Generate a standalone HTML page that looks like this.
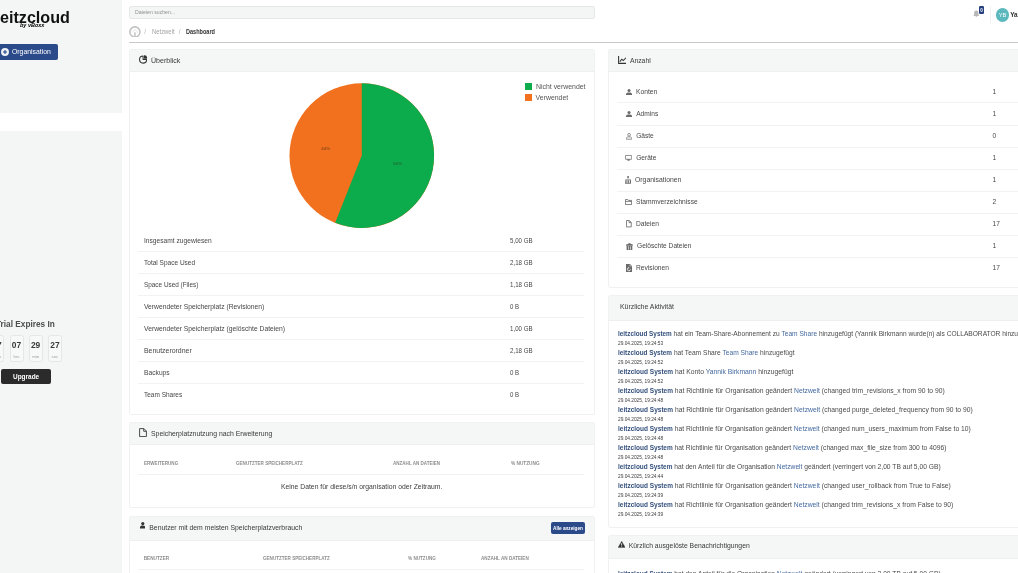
<!DOCTYPE html>
<html><head><meta charset="utf-8"><style>
html,body{margin:0;padding:0}
body{will-change:transform;width:1018px;height:573px;overflow:hidden;position:relative;background:#fff;font-family:"Liberation Sans",sans-serif;color:#444}
.a{position:absolute;white-space:nowrap;line-height:1}
.card{position:absolute;background:#fff;border:1px solid #f0f1f1;box-sizing:border-box;border-radius:2px;overflow:hidden}
.ch{position:absolute;left:0;right:0;top:0;background:#f5f6f6;border-bottom:1px solid #eeefef;box-sizing:border-box}
.sep{position:absolute;height:1px;background:#f1f2f2}
.lk{color:#44699f}
.sys{color:#34507c;font-weight:bold;font-size:6.45px}
</style></head><body>
<div class="a" style="left:0px;top:0px;width:122px;height:112.5px;background:#f4f5f5;"></div>
<div class="a" style="left:0px;top:131px;width:122px;height:442px;background:#f4f5f5;"></div>
<div class="a " style="left:-0.40px;top:9px;font-size:16.5px;color:#111;font-weight:bold;transform:scaleX(0.9776);transform-origin:0 0;">eitzcloud</div>
<div class="a " style="left:20.40px;top:23px;font-size:5.6px;color:#000;font-weight:bold;font-style:italic;transform:scaleX(0.9799);transform-origin:0 0;">by vBoxx</div>
<div class="a" style="left:-3px;top:44.2px;width:61.4px;height:15.5px;background:#2b4a8a;border-radius:2px"></div>
<svg class="a" style="left:1px;top:48px" width="8" height="8" viewBox="0 0 8 8"><circle cx="4" cy="4" r="3.95" fill="#eef1f6"/><rect x="2" y="3.45" width="4" height="1.1" fill="#2b4a8a"/><rect x="3.45" y="2" width="1.1" height="4" fill="#2b4a8a"/></svg>
<div class="a " style="left:12.20px;top:49px;font-size:6.85px;color:#fff;transform:scaleX(0.9990);transform-origin:0 0;">Organisation</div>
<div class="a " style="left:-3.80px;top:320px;font-size:8.4px;color:#4d4d4d;font-weight:bold;transform:scaleX(0.9873);transform-origin:0 0;">Trial Expires In</div>
<div class="a" style="left:-10.1px;top:335.1px;width:14px;height:26.6px;border:1px solid #e5e6e6;background:#f7f8f8;box-sizing:border-box;border-radius:2.5px"></div>
<div class="a" style="left:9.5px;top:335.1px;width:14px;height:26.6px;border:1px solid #e5e6e6;background:#f7f8f8;box-sizing:border-box;border-radius:2.5px"></div>
<div class="a" style="left:28.6px;top:335.1px;width:14px;height:26.6px;border:1px solid #e5e6e6;background:#f7f8f8;box-sizing:border-box;border-radius:2.5px"></div>
<div class="a" style="left:47.6px;top:335.1px;width:14.6px;height:26.6px;border:1px solid #e5e6e6;background:#f7f8f8;box-sizing:border-box;border-radius:2.5px"></div>
<div class="a" style="left:-10.1px;top:341px;width:14px;text-align:center;font-size:8.4px;font-weight:bold;color:#3a3a3a">07</div>
<div class="a" style="left:-10.1px;top:355px;width:14px;text-align:center;font-size:4.3px;color:#9c9c9c">days</div>
<div class="a" style="left:9.5px;top:341px;width:14px;text-align:center;font-size:8.4px;font-weight:bold;color:#3a3a3a">07</div>
<div class="a" style="left:9.5px;top:355px;width:14px;text-align:center;font-size:4.3px;color:#9c9c9c">hrs</div>
<div class="a" style="left:28.6px;top:341px;width:14px;text-align:center;font-size:8.4px;font-weight:bold;color:#3a3a3a">29</div>
<div class="a" style="left:28.6px;top:355px;width:14px;text-align:center;font-size:4.3px;color:#9c9c9c">min</div>
<div class="a" style="left:47.6px;top:341px;width:14.6px;text-align:center;font-size:8.4px;font-weight:bold;color:#3a3a3a">27</div>
<div class="a" style="left:47.6px;top:355px;width:14.6px;text-align:center;font-size:4.3px;color:#9c9c9c">sec</div>
<div class="a" style="left:1.4px;top:369.4px;width:49.6px;height:14.6px;background:#2b2b2b;border-radius:2px"></div>
<div class="a " style="left:12.90px;top:374px;font-size:6.6px;color:#fff;font-weight:bold;transform:scaleX(0.9787);transform-origin:0 0;">Upgrade</div>
<div class="a" style="left:129.1px;top:6px;width:465.6px;height:12.6px;background:#f4f5f5;border:1px solid #e6e7e7;box-sizing:border-box;border-radius:2px"></div>
<div class="a " style="left:135.00px;top:10px;font-size:5.2px;color:#8f8f8f;transform:scaleX(0.9933);transform-origin:0 0;">Dateien suchen...</div>
<svg class="a" style="left:129px;top:25.6px" width="11.8" height="11.8" viewBox="0 0 11.8 11.8"><circle cx="5.9" cy="5.9" r="5.05" fill="none" stroke="#c3c3c3" stroke-width="1.6"/><path d="M3.2 6.2 L5.9 3.6 L8.6 6.2" fill="none" stroke="#d8d8d8" stroke-width="0.7"/><rect x="5.15" y="6.3" width="1.5" height="4.6" fill="#c3c3c3"/></svg>
<div class="a " style="left:144.20px;top:29px;font-size:6.3px;color:#b5b5b5;">/</div>
<div class="a " style="left:152.00px;top:29px;font-size:6.3px;color:#a3a3a3;transform:scaleX(0.9355);transform-origin:0 0;">Netzwelt</div>
<div class="a " style="left:178.80px;top:29px;font-size:6.3px;color:#b5b5b5;">/</div>
<div class="a " style="left:185.90px;top:29px;font-size:6.3px;color:#333;font-weight:bold;transform:scaleX(0.8813);transform-origin:0 0;">Dashboard</div>
<div class="a" style="left:129px;top:42px;width:889px;height:1px;background:#c8c9c9;"></div>
<svg class="a" style="left:972.6px;top:10px" width="6.6" height="7" viewBox="0 0 6.6 7"><path d="M3.3 0.4 C1.7 0.4 1.1 1.8 1.1 3.2 L1.1 4.9 L0.2 6.1 L6.4 6.1 L5.5 4.9 L5.5 3.2 C5.5 1.8 4.9 0.4 3.3 0.4 Z" fill="#b8b8b8"/><circle cx="3.3" cy="6.4" r="0.6" fill="#b8b8b8"/></svg>
<div class="a" style="left:978.8px;top:6.1px;width:5.4px;height:8.3px;background:#243f7d;border-radius:1.2px"></div>
<div class="a" style="left:978.8px;top:9px;width:5.4px;text-align:center;font-size:4.6px;font-weight:bold;color:#fff">0</div>
<div class="a" style="left:990px;top:6px;width:0.5px;height:18px;background:#f2f2f2;"></div>
<div class="a" style="left:995.6px;top:7.9px;width:13.8px;height:13.8px;border-radius:50%;background:#5bb8bc"></div>
<div class="a" style="left:995.6px;top:13px;width:13.8px;text-align:center;font-size:5.6px;color:#fff">YB</div>
<div class="a " style="left:1010.20px;top:12px;font-size:6.4px;color:#2f2f2f;font-weight:bold;">Ya</div>
<div class="card" style="left:129.2px;top:49.2px;width:465.5px;height:366.3px"><div class="ch" style="height:22.3px"></div></div>
<div class="card" style="left:129.2px;top:422.2px;width:465.5px;height:86.3px"><div class="ch" style="height:22.1px"></div></div>
<div class="card" style="left:129.2px;top:516px;width:465.5px;height:80px"><div class="ch" style="height:23.7px"></div></div>
<div class="card" style="left:608.2px;top:49.3px;width:470px;height:238.7px"><div class="ch" style="height:22.2px"></div></div>
<div class="card" style="left:608.2px;top:295.2px;width:470px;height:232.4px"><div class="ch" style="height:24.4px"></div></div>
<div class="card" style="left:608.2px;top:535.2px;width:470px;height:80px"><div class="ch" style="height:23.0px"></div></div>
<svg class="a" style="left:138.6px;top:55.3px" width="8.8" height="8.8" viewBox="0 0 8.8 8.8"><path d="M4.1 1.05 A3.55 3.55 0 1 0 7.65 4.6 L4.1 4.6 Z" fill="none" stroke="#333" stroke-width="1.05" stroke-linejoin="round"/><path d="M5.0 0.3 L5.0 3.7 L8.4 3.7 A3.4 3.4 0 0 0 5.0 0.3 Z" fill="#333"/></svg>
<div class="a " style="left:150.70px;top:57px;font-size:7.0px;color:#3a3a3a;transform:scaleX(1.0042);transform-origin:0 0;">Überblick</div>
<svg class="a" style="left:0;top:0" width="1018" height="573" viewBox="0 0 1018 573"><circle cx="361.8" cy="155.6" r="72.3" fill="#f1711f"/><path d="M361.8 155.6 L361.8 83.3 A72.3 72.3 0 1 1 335.18 222.82 Z" fill="#0cab4c"/><text x="393" y="164.6" font-size="4.4" fill="#2a3a2a" fill-opacity="0.75" font-family="Liberation Sans">56%</text><text x="321.3" y="150.1" font-size="4.4" fill="#3a2a1a" fill-opacity="0.75" font-family="Liberation Sans">44%</text></svg>
<div class="a" style="left:525px;top:83px;width:7px;height:6.6px;background:#0cab4c;"></div>
<div class="a" style="left:525px;top:94px;width:7px;height:6.6px;background:#f1711f;"></div>
<div class="a " style="left:535.60px;top:84px;font-size:6.9px;color:#555;transform:scaleX(1.0026);transform-origin:0 0;">Nicht verwendet</div>
<div class="a " style="left:535.60px;top:95px;font-size:6.9px;color:#555;">Verwendet</div>
<div class="a " style="left:143.90px;top:238px;font-size:6.75px;color:#474747;transform:scaleX(0.9845);transform-origin:0 0;">Insgesamt zugewiesen</div>
<div class="a " style="left:509.80px;top:238px;font-size:6.75px;color:#474747;transform:scaleX(0.9126);transform-origin:0 0;">5,00 GB</div>
<div class="sep" style="left:138px;width:446px;top:251.3px"></div>
<div class="a " style="left:143.90px;top:260px;font-size:6.75px;color:#474747;transform:scaleX(0.9658);transform-origin:0 0;">Total Space Used</div>
<div class="a " style="left:509.80px;top:260px;font-size:6.75px;color:#474747;transform:scaleX(0.9126);transform-origin:0 0;">2,18 GB</div>
<div class="sep" style="left:138px;width:446px;top:273.3px"></div>
<div class="a " style="left:143.90px;top:282px;font-size:6.75px;color:#474747;transform:scaleX(0.9460);transform-origin:0 0;">Space Used (Files)</div>
<div class="a " style="left:509.80px;top:282px;font-size:6.75px;color:#474747;transform:scaleX(0.9126);transform-origin:0 0;">1,18 GB</div>
<div class="sep" style="left:138px;width:446px;top:295.3px"></div>
<div class="a " style="left:143.90px;top:304px;font-size:6.75px;color:#474747;transform:scaleX(0.9988);transform-origin:0 0;">Verwendeter Speicherplatz (Revisionen)</div>
<div class="a " style="left:509.80px;top:304px;font-size:6.75px;color:#474747;transform:scaleX(0.8982);transform-origin:0 0;">0 B</div>
<div class="sep" style="left:138px;width:446px;top:317.3px"></div>
<div class="a " style="left:143.90px;top:326px;font-size:6.75px;color:#474747;transform:scaleX(1.0001);transform-origin:0 0;">Verwendeter Speicherplatz (gelöschte Dateien)</div>
<div class="a " style="left:509.80px;top:326px;font-size:6.75px;color:#474747;transform:scaleX(0.9126);transform-origin:0 0;">1,00 GB</div>
<div class="sep" style="left:138px;width:446px;top:339.3px"></div>
<div class="a " style="left:143.90px;top:348px;font-size:6.75px;color:#474747;transform:scaleX(1.0251);transform-origin:0 0;">Benutzerordner</div>
<div class="a " style="left:509.80px;top:348px;font-size:6.75px;color:#474747;transform:scaleX(0.9126);transform-origin:0 0;">2,18 GB</div>
<div class="sep" style="left:138px;width:446px;top:361.3px"></div>
<div class="a " style="left:143.90px;top:370px;font-size:6.75px;color:#474747;transform:scaleX(0.9927);transform-origin:0 0;">Backups</div>
<div class="a " style="left:509.80px;top:370px;font-size:6.75px;color:#474747;transform:scaleX(0.8982);transform-origin:0 0;">0 B</div>
<div class="sep" style="left:138px;width:446px;top:383.3px"></div>
<div class="a " style="left:143.90px;top:392px;font-size:6.75px;color:#474747;transform:scaleX(0.9605);transform-origin:0 0;">Team Shares</div>
<div class="a " style="left:509.80px;top:392px;font-size:6.75px;color:#474747;transform:scaleX(0.8982);transform-origin:0 0;">0 B</div>
<svg class="a" style="left:138.8px;top:428.2px" width="8" height="9.2" viewBox="0 0 8 9.2"><path d="M0.6 0.6 L4.9 0.6 L7.4 3.1 L7.4 8.6 L0.6 8.6 Z M4.7 0.6 L4.7 3.3 L7.4 3.3" fill="none" stroke="#4a4a4a" stroke-width="1.0" stroke-linejoin="round"/></svg>
<div class="a " style="left:150.70px;top:431px;font-size:6.86px;color:#3a3a3a;transform:scaleX(1.0002);transform-origin:0 0;">Speicherplatznutzung nach Erweiterung</div>
<div class="a " style="left:144.00px;top:462px;font-size:4.7px;color:#8d8d8d;font-weight:bold;transform:scaleX(0.9754);transform-origin:0 0;">ERWEITERUNG</div>
<div class="a " style="left:235.70px;top:462px;font-size:4.7px;color:#8d8d8d;font-weight:bold;transform:scaleX(0.9731);transform-origin:0 0;">GENUTZTER SPEICHERPLATZ</div>
<div class="a " style="left:392.80px;top:462px;font-size:4.7px;color:#8d8d8d;font-weight:bold;transform:scaleX(0.9684);transform-origin:0 0;">ANZAHL AN DATEIEN</div>
<div class="a " style="left:510.80px;top:462px;font-size:4.7px;color:#8d8d8d;font-weight:bold;transform:scaleX(1.0084);transform-origin:0 0;">% NUTZUNG</div>
<div class="sep" style="left:138px;width:446px;top:474px"></div>
<div class="a " style="left:281.10px;top:484px;font-size:6.8px;color:#3c3c3c;transform:scaleX(1.0006);transform-origin:0 0;">Keine Daten für diese/s/n organisation oder Zeitraum.</div>
<svg class="a" style="left:139.6px;top:522.3px" width="5.6" height="6.4" viewBox="0 0 5.6 6.4"><circle cx="2.8" cy="1.6" r="1.6" fill="#333"/><path d="M0 6.4 L0 5.4 C0 4.2 1.1 3.6 2.8 3.6 C4.5 3.6 5.6 4.2 5.6 5.4 L5.6 6.4 Z" fill="#333"/></svg>
<div class="a " style="left:149.30px;top:525px;font-size:6.83px;color:#3a3a3a;transform:scaleX(1.0000);transform-origin:0 0;">Benutzer mit dem meisten Speicherplatzverbrauch</div>
<div class="a" style="left:551px;top:522px;width:33.9px;height:12.3px;background:#2b4a8a;border-radius:2px"></div>
<div class="a " style="left:553.30px;top:527px;font-size:4.7px;color:#fff;font-weight:bold;transform:scaleX(0.9988);transform-origin:0 0;">Alle anzeigen</div>
<div class="a " style="left:143.70px;top:557px;font-size:4.7px;color:#8d8d8d;font-weight:bold;">BENUTZER</div>
<div class="a " style="left:262.50px;top:557px;font-size:4.7px;color:#8d8d8d;font-weight:bold;transform:scaleX(0.9731);transform-origin:0 0;">GENUTZTER SPEICHERPLATZ</div>
<div class="a " style="left:408.00px;top:557px;font-size:4.7px;color:#8d8d8d;font-weight:bold;transform:scaleX(0.9839);transform-origin:0 0;">% NUTZUNG</div>
<div class="a " style="left:481.30px;top:557px;font-size:4.7px;color:#8d8d8d;font-weight:bold;transform:scaleX(0.9827);transform-origin:0 0;">ANZAHL AN DATEIEN</div>
<div class="sep" style="left:138px;width:446px;top:569.4px"></div>
<svg class="a" style="left:617.6px;top:56.1px" width="8.6" height="8" viewBox="0 0 8.6 8"><path d="M0.6 0 L0.6 7.4 L8.4 7.4" fill="none" stroke="#333" stroke-width="1.05"/><path d="M1.8 5.6 L3.8 3.2 L5.2 4.6 L8 1.8" fill="none" stroke="#333" stroke-width="1.05"/></svg>
<div class="a " style="left:629.90px;top:58px;font-size:6.8px;color:#3a3a3a;">Anzahl</div>
<svg class="a" style="left:625.9px;top:88.8px" width="6.1" height="6.1" viewBox="0 0 6.1 6.1"><circle cx="3.05" cy="1.55" r="1.55" fill="#6b6b6b"/><path d="M0 6.1 L0 5.2 C0 4 1.2 3.4 3.05 3.4 C4.9 3.4 6.1 4 6.1 5.2 L6.1 6.1 Z" fill="#6b6b6b"/></svg>
<div class="a " style="left:636.20px;top:89px;font-size:6.6px;color:#474747;transform:scaleX(1.0182);transform-origin:0 0;">Konten</div>
<div class="a " style="left:992.60px;top:89px;font-size:6.6px;color:#474747;">1</div>
<div class="sep" style="left:617px;width:460px;top:102.4px"></div>
<svg class="a" style="left:625.9px;top:110.85px" width="6.1" height="6.1" viewBox="0 0 6.1 6.1"><circle cx="3.05" cy="1.55" r="1.55" fill="#6b6b6b"/><path d="M0 6.1 L0 5.2 C0 4 1.2 3.4 3.05 3.4 C4.9 3.4 6.1 4 6.1 5.2 L6.1 6.1 Z" fill="#6b6b6b"/></svg>
<div class="a " style="left:636.20px;top:111px;font-size:6.6px;color:#474747;">Admins</div>
<div class="a " style="left:992.60px;top:111px;font-size:6.6px;color:#474747;">1</div>
<div class="sep" style="left:617px;width:460px;top:124.5px"></div>
<svg class="a" style="left:625.9px;top:133px" width="6.2" height="6.6" viewBox="0 0 6.2 6.6"><circle cx="3.1" cy="1.75" r="1.35" fill="none" stroke="#6b6b6b" stroke-width="0.75"/><path d="M0.4 6.2 L0.4 5.4 C0.4 4.3 1.5 3.8 3.1 3.8 C4.7 3.8 5.8 4.3 5.8 5.4 L5.8 6.2 Z" fill="none" stroke="#6b6b6b" stroke-width="0.75" stroke-linejoin="round"/></svg>
<div class="a " style="left:636.20px;top:133px;font-size:6.6px;color:#474747;">Gäste</div>
<div class="a " style="left:992.60px;top:133px;font-size:6.6px;color:#474747;">0</div>
<div class="sep" style="left:617px;width:460px;top:146.5px"></div>
<svg class="a" style="left:625px;top:155px" width="7.1" height="5.7" viewBox="0 0 7.1 5.7"><rect x="0.4" y="0.4" width="6.3" height="3.9" rx="0.4" fill="none" stroke="#6b6b6b" stroke-width="0.8"/><rect x="2.4" y="4.3" width="2.3" height="1.4" fill="#6b6b6b"/></svg>
<div class="a " style="left:636.20px;top:155px;font-size:6.6px;color:#474747;">Geräte</div>
<div class="a " style="left:992.60px;top:155px;font-size:6.6px;color:#474747;">1</div>
<div class="sep" style="left:617px;width:460px;top:168.6px"></div>
<svg class="a" style="left:625px;top:176.1px" width="6.4" height="7.7" viewBox="0 0 6.4 7.7"><rect x="2.3" y="0" width="1.5" height="2.4" fill="#6b6b6b"/><rect x="0" y="6.9" width="6.4" height="0.8" fill="#6b6b6b"/><rect x="0.3" y="4.1" width="1.3" height="3" fill="#6b6b6b"/><rect x="2.55" y="4.1" width="1.3" height="3" fill="#6b6b6b"/><rect x="4.8" y="4.1" width="1.3" height="3" fill="#6b6b6b"/><rect x="0.3" y="3.5" width="5.8" height="0.6" fill="#6b6b6b"/></svg>
<div class="a " style="left:634.80px;top:177px;font-size:6.6px;color:#474747;transform:scaleX(1.0365);transform-origin:0 0;">Organisationen</div>
<div class="a " style="left:992.60px;top:177px;font-size:6.6px;color:#474747;">1</div>
<div class="sep" style="left:617px;width:460px;top:190.6px"></div>
<svg class="a" style="left:625.1px;top:199px" width="7" height="6" viewBox="0 0 7 6"><path d="M0.45 0.45 L2.7 0.45 L3.5 1.4 L6.55 1.4 L6.55 5.55 L0.45 5.55 Z M0.45 2.4 L6.55 2.4" fill="none" stroke="#6b6b6b" stroke-width="0.85" stroke-linejoin="round"/></svg>
<div class="a " style="left:636.10px;top:199px;font-size:6.6px;color:#474747;transform:scaleX(1.0150);transform-origin:0 0;">Stammverzeichnisse</div>
<div class="a " style="left:992.60px;top:199px;font-size:6.6px;color:#474747;">2</div>
<div class="sep" style="left:617px;width:460px;top:212.7px"></div>
<svg class="a" style="left:626.1px;top:220.3px" width="5.7" height="7.4" viewBox="0 0 5.7 7.4"><path d="M0.45 0.45 L3.3 0.45 L5.25 2.4 L5.25 6.95 L0.45 6.95 Z M3.1 0.5 L3.1 2.6 L5.2 2.6" fill="none" stroke="#6b6b6b" stroke-width="0.85" stroke-linejoin="round"/></svg>
<div class="a " style="left:636.20px;top:221px;font-size:6.6px;color:#474747;transform:scaleX(1.0110);transform-origin:0 0;">Dateien</div>
<div class="a " style="left:992.60px;top:221px;font-size:6.6px;color:#474747;">17</div>
<div class="sep" style="left:617px;width:460px;top:234.7px"></div>
<svg class="a" style="left:625.8px;top:242.5px" width="6.9" height="7.5" viewBox="0 0 6.9 7.5"><path d="M0 2 L3.45 0 L6.9 2 Z" fill="#6b6b6b"/><rect x="0" y="1.6" width="6.9" height="1" fill="#6b6b6b"/><rect x="0.6" y="2.6" width="5.7" height="4.9" fill="#6b6b6b"/><rect x="2.1" y="3.3" width="0.7" height="3.4" fill="#fff" opacity="0.85"/><rect x="4.1" y="3.3" width="0.7" height="3.4" fill="#fff" opacity="0.85"/></svg>
<div class="a " style="left:637.10px;top:243px;font-size:6.6px;color:#474747;transform:scaleX(1.0000);transform-origin:0 0;">Gelöschte Dateien</div>
<div class="a " style="left:992.60px;top:243px;font-size:6.6px;color:#474747;">1</div>
<div class="sep" style="left:617px;width:460px;top:256.8px"></div>
<svg class="a" style="left:625.9px;top:264.1px" width="6.2" height="8.2" viewBox="0 0 6.2 8.2"><path d="M0 0 L4 0 L6.2 2.2 L6.2 8.2 L0 8.2 Z" fill="#6b6b6b"/><path d="M3.6 0.3 L3.6 2.6 L5.9 2.6" fill="#fff" opacity="0.5"/><path d="M4.4 5.3 A1.5 1.5 0 1 1 3 3.8" fill="none" stroke="#fff" stroke-width="0.75"/><path d="M2.4 3.1 L3.4 3.8 L2.5 4.6 Z" fill="#fff"/></svg>
<div class="a " style="left:636.10px;top:265px;font-size:6.6px;color:#474747;transform:scaleX(1.0106);transform-origin:0 0;">Revisionen</div>
<div class="a " style="left:992.60px;top:265px;font-size:6.6px;color:#474747;">17</div>
<div class="a " style="left:619.70px;top:304px;font-size:6.88px;color:#3a3a3a;transform:scaleX(0.9997);transform-origin:0 0;">Kürzliche Aktivität</div>
<div class="a" style="left:617.9px;top:331px;font-size:6.7px;color:#4a4a4a;transform:scaleX(0.9885);transform-origin:0 0"><span class="sys">leitzcloud System</span> hat ein Team-Share-Abonnement zu <span class="lk">Team Share</span> hinzugefügt (Yannik Birkmann wurde(n) als COLLABORATOR hinzugefügt)</div>
<div class="a " style="left:617.90px;top:342px;font-size:4.75px;color:#3c3c3c;transform:scaleX(1.0044);transform-origin:0 0;">29.04.2025, 19:24:53</div>
<div class="a" style="left:617.9px;top:350px;font-size:6.7px;color:#4a4a4a;transform:scaleX(0.9938);transform-origin:0 0"><span class="sys">leitzcloud System</span> hat Team Share <span class="lk">Team Share</span> hinzugefügt</div>
<div class="a " style="left:617.90px;top:361px;font-size:4.75px;color:#3c3c3c;transform:scaleX(1.0044);transform-origin:0 0;">29.04.2025, 19:24:52</div>
<div class="a" style="left:617.9px;top:369px;font-size:6.7px;color:#4a4a4a;transform:scaleX(1.0125);transform-origin:0 0"><span class="sys">leitzcloud System</span> hat Konto <span class="lk">Yannik Birkmann</span> hinzugefügt</div>
<div class="a " style="left:617.90px;top:380px;font-size:4.75px;color:#3c3c3c;transform:scaleX(1.0044);transform-origin:0 0;">29.04.2025, 19:24:52</div>
<div class="a" style="left:617.9px;top:388px;font-size:6.7px;color:#4a4a4a;transform:scaleX(1.0110);transform-origin:0 0"><span class="sys">leitzcloud System</span> hat Richtlinie für Organisation geändert <span class="lk">Netzwelt</span> (changed trim_revisions_x from 90 to 90)</div>
<div class="a " style="left:617.90px;top:399px;font-size:4.75px;color:#3c3c3c;transform:scaleX(1.0044);transform-origin:0 0;">29.04.2025, 19:24:48</div>
<div class="a" style="left:617.9px;top:407px;font-size:6.7px;color:#4a4a4a;transform:scaleX(1.0116);transform-origin:0 0"><span class="sys">leitzcloud System</span> hat Richtlinie für Organisation geändert <span class="lk">Netzwelt</span> (changed purge_deleted_frequency from 90 to 90)</div>
<div class="a " style="left:617.90px;top:418px;font-size:4.75px;color:#3c3c3c;transform:scaleX(1.0044);transform-origin:0 0;">29.04.2025, 19:24:48</div>
<div class="a" style="left:617.9px;top:426px;font-size:6.7px;color:#4a4a4a;transform:scaleX(1.0095);transform-origin:0 0"><span class="sys">leitzcloud System</span> hat Richtlinie für Organisation geändert <span class="lk">Netzwelt</span> (changed num_users_maximum from False to 10)</div>
<div class="a " style="left:617.90px;top:437px;font-size:4.75px;color:#3c3c3c;transform:scaleX(1.0044);transform-origin:0 0;">29.04.2025, 19:24:48</div>
<div class="a" style="left:617.9px;top:445px;font-size:6.7px;color:#4a4a4a;transform:scaleX(1.0058);transform-origin:0 0"><span class="sys">leitzcloud System</span> hat Richtlinie für Organisation geändert <span class="lk">Netzwelt</span> (changed max_file_size from 300 to 4096)</div>
<div class="a " style="left:617.90px;top:456px;font-size:4.75px;color:#3c3c3c;transform:scaleX(1.0044);transform-origin:0 0;">29.04.2025, 19:24:48</div>
<div class="a" style="left:617.9px;top:464px;font-size:6.7px;color:#4a4a4a;transform:scaleX(0.9998);transform-origin:0 0"><span class="sys">leitzcloud System</span> hat den Anteil für die Organisation <span class="lk">Netzwelt</span> geändert (verringert von 2,00 TB auf 5,00 GB)</div>
<div class="a " style="left:617.90px;top:475px;font-size:4.75px;color:#3c3c3c;transform:scaleX(1.0044);transform-origin:0 0;">29.04.2025, 19:24:44</div>
<div class="a" style="left:617.9px;top:483px;font-size:6.7px;color:#4a4a4a;transform:scaleX(1.0101);transform-origin:0 0"><span class="sys">leitzcloud System</span> hat Richtlinie für Organisation geändert <span class="lk">Netzwelt</span> (changed user_rollback from True to False)</div>
<div class="a " style="left:617.90px;top:494px;font-size:4.75px;color:#3c3c3c;transform:scaleX(1.0044);transform-origin:0 0;">29.04.2025, 19:24:39</div>
<div class="a" style="left:617.9px;top:502px;font-size:6.7px;color:#4a4a4a;transform:scaleX(1.0097);transform-origin:0 0"><span class="sys">leitzcloud System</span> hat Richtlinie für Organisation geändert <span class="lk">Netzwelt</span> (changed trim_revisions_x from False to 90)</div>
<div class="a " style="left:617.90px;top:513px;font-size:4.75px;color:#3c3c3c;transform:scaleX(1.0044);transform-origin:0 0;">29.04.2025, 19:24:39</div>
<svg class="a" style="left:617.8px;top:541.4px" width="7.4" height="6.6" viewBox="0 0 7.4 6.6"><path d="M3.7 0.2 L7.3 6.4 L0.1 6.4 Z" fill="#333" stroke="#333" stroke-width="0.3" stroke-linejoin="round"/><rect x="3.3" y="2.2" width="0.8" height="2.3" fill="#fff"/><rect x="3.3" y="4.9" width="0.8" height="0.75" fill="#fff"/></svg>
<div class="a " style="left:628.80px;top:543px;font-size:6.8px;color:#3a3a3a;">Kürzlich ausgelöste Benachrichtigungen</div>
<div class="a" style="left:617.9px;top:571px;font-size:6.7px;color:#4a4a4a;transform:scaleX(0.9998);transform-origin:0 0"><span class="sys">leitzcloud System</span> hat den Anteil für die Organisation <span class="lk">Netzwelt</span> geändert (verringert von 2,00 TB auf 5,00 GB)</div>
</body></html>
